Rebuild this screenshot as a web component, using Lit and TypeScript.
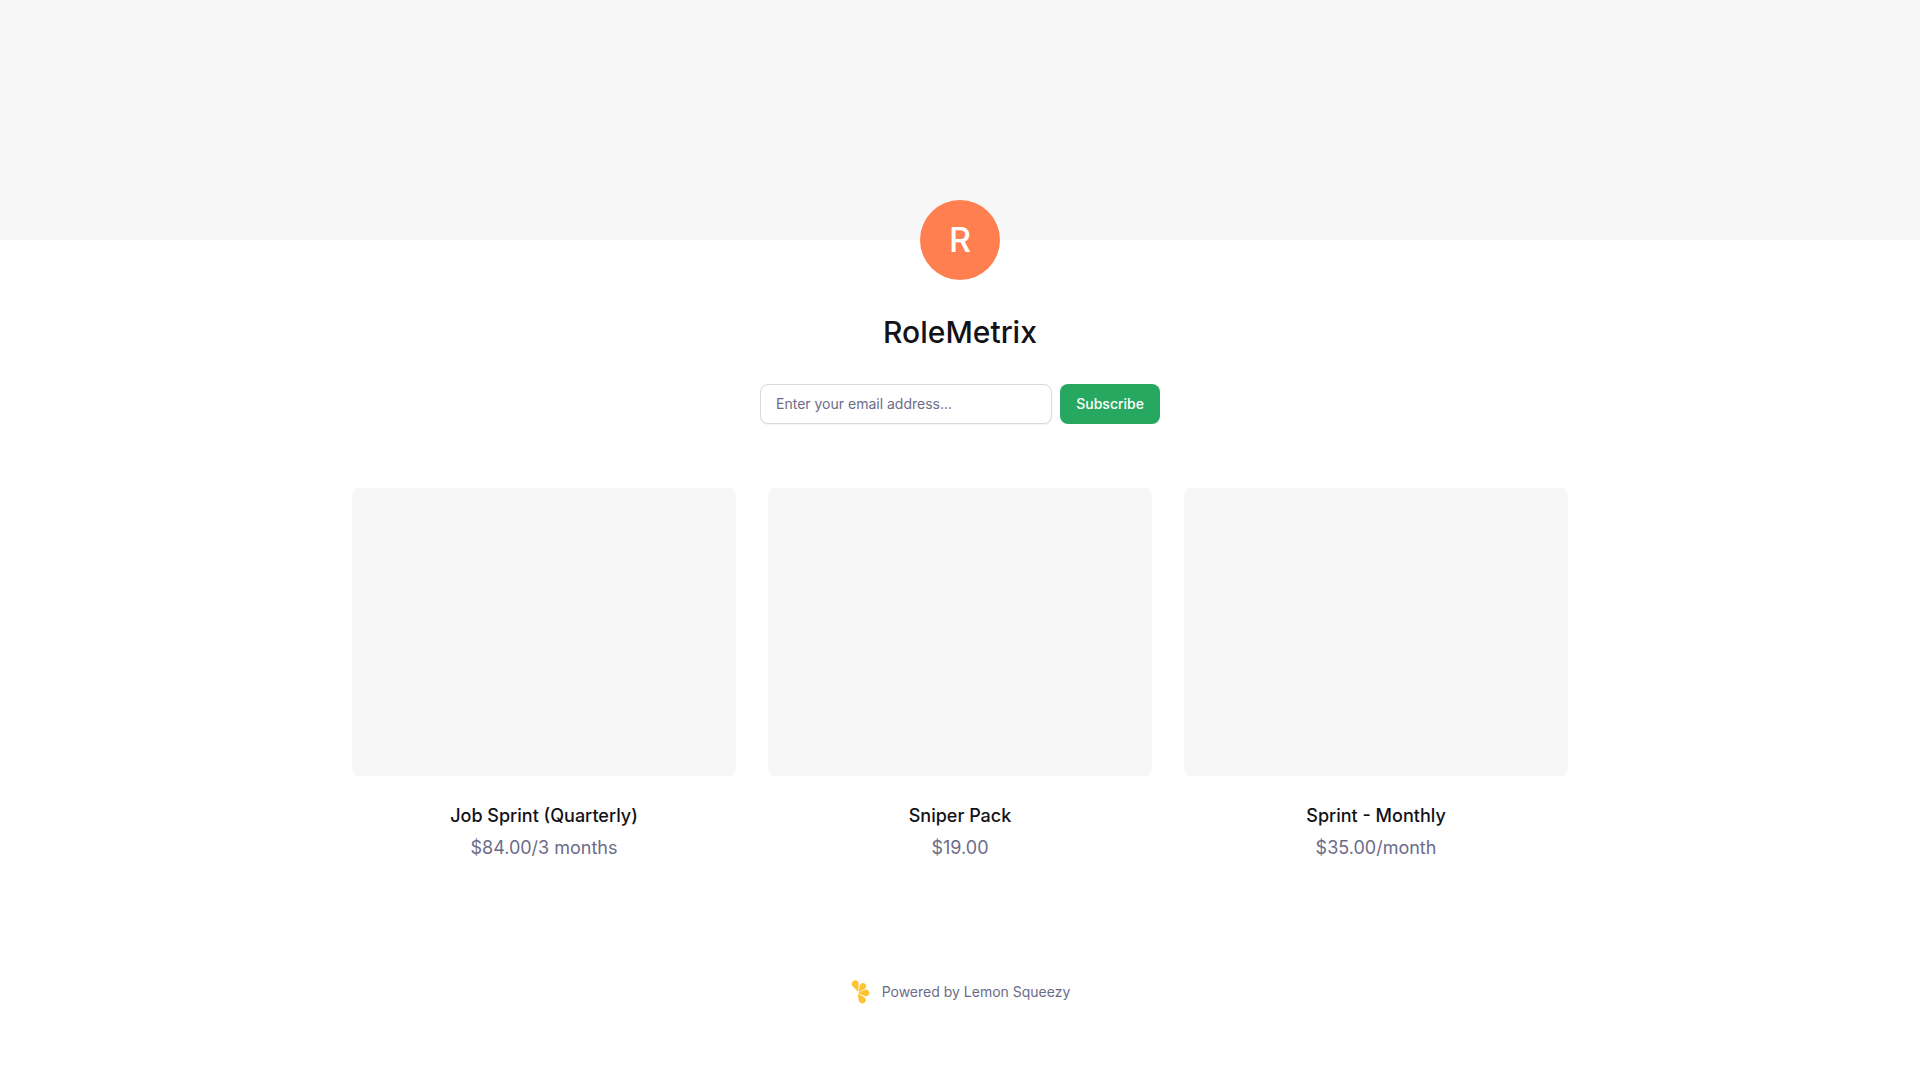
import { LitElement, html, css } from "lit";
import { customElement } from "lit/decorators.js";

interface Product {
  name: string;
  price: string;
}

const PRODUCTS: Product[] = [
  { name: "Job Sprint (Quarterly)", price: "$84.00/3 months" },
  { name: "Sniper Pack", price: "$19.00" },
  { name: "Sprint - Monthly", price: "$35.00/month" },
];

@customElement("app-root")
export class AppRoot extends LitElement {
  static styles = css`
    :host {
      display: block;
      min-height: 100vh;
      background: #ffffff;
      color: #121217;
      font-family: Inter, "Liberation Sans", sans-serif;
      font-size: 14px;
      line-height: 24px;
    }
    * {
      box-sizing: border-box;
    }
    .banner {
      height: 240px;
      background: #f7f7f7;
    }
    .store {
      display: flex;
      flex-direction: column;
      align-items: center;
      gap: 32px;
      margin-top: -40px;
      padding: 0 24px;
    }
    .avatar {
      display: flex;
      align-items: center;
      justify-content: center;
      width: 80px;
      height: 80px;
      border-radius: 50%;
      background: #ff7f50;
      color: #ffffff;
      font-size: 34px;
      font-weight: 500;
    }
    .title {
      margin: 0;
      font-size: 30px;
      line-height: 40px;
      font-weight: 500;
    }
    .subscribe {
      display: flex;
      gap: 8px;
      width: 100%;
      max-width: 400px;
    }
    .email {
      flex: 1;
      min-width: 0;
      height: 40px;
      padding: 0 15px 2px;
      border: 1px solid #d9d9e0;
      border-radius: 8px;
      background: #ffffff;
      box-shadow: 0 1px 1px rgba(18, 18, 23, 0.05);
      color: inherit;
      font: inherit;
    }
    .email::placeholder {
      color: #6c6c89;
      opacity: 1;
    }
    .submit {
      height: 40px;
      padding: 0 16px;
      border: 0;
      border-radius: 8px;
      background: #27a860;
      color: #ffffff;
      font: inherit;
      font-weight: 500;
      cursor: pointer;
    }
    .products {
      display: grid;
      grid-template-columns: repeat(auto-fit, minmax(280px, 1fr));
      gap: 32px;
      max-width: 1264px;
      margin: 64px auto 0;
      padding: 0 24px;
      list-style: none;
    }
    .product {
      display: flex;
      flex-direction: column;
      gap: 24px;
      color: inherit;
      text-align: center;
      text-decoration: none;
      font-size: 18px;
      line-height: 32px;
    }
    .thumb {
      aspect-ratio: 4 / 3;
      border-radius: 8px;
      background: #f7f7f7;
    }
    .name {
      margin: 0;
      font: inherit;
      font-weight: 500;
    }
    .price {
      margin: 0;
      color: #6c6c89;
    }
    .footer {
      display: flex;
      justify-content: center;
      padding: 116px 24px 64px;
    }
    .powered {
      display: flex;
      align-items: center;
      gap: 8px;
      color: #6c6c89;
      text-decoration: none;
    }
    .logo {
      width: 24px;
      height: 24px;
      fill: #ffc233;
    }
  `;

  render() {
    return html`
      <div class="banner"></div>
      <header class="store">
        <div class="avatar" aria-hidden="true">R</div>
        <h1 class="title">RoleMetrix</h1>
        <form class="subscribe" @submit=${(e: Event) => e.preventDefault()}>
          <input
            class="email"
            type="email"
            aria-label="Email address"
            placeholder="Enter your email address..."
          />
          <button class="submit" type="submit">Subscribe</button>
        </form>
      </header>
      <main>
        <ul class="products">
          ${PRODUCTS.map(
            (p) => html`
              <li>
                <a class="product" href="#">
                  <div class="thumb"></div>
                  <div>
                    <h2 class="name">${p.name}</h2>
                    <p class="price">${p.price}</p>
                  </div>
                </a>
              </li>
            `
          )}
        </ul>
      </main>
      <footer class="footer">
        <a class="powered" href="#">
          <svg class="logo" viewBox="0 0 72 72" aria-hidden="true">
            <path d="M22 33 L8 19 C3 13 5 5 12 2 C20 -1 26 4 26 12 L25 32 Q24 35 22 33 Z" />
            <path d="M26 33 L30 16 C32 9 39 7 45 11 C50 15 50 21 46 25 L29 35 Q26 36 26 33 Z" />
            <path d="M27 37 L44 29 C51 27 58 32 58 39 C58 46 52 50 45 48 L27 41 Q24 39 27 37 Z" />
            <path d="M25 42 L42 51 C48 55 49 62 45 67 C39 72 30 71 27 64 L23 44 Q23 41 25 42 Z" />
          </svg>
          <span>Powered by Lemon Squeezy</span>
        </a>
      </footer>
    `;
  }
}
